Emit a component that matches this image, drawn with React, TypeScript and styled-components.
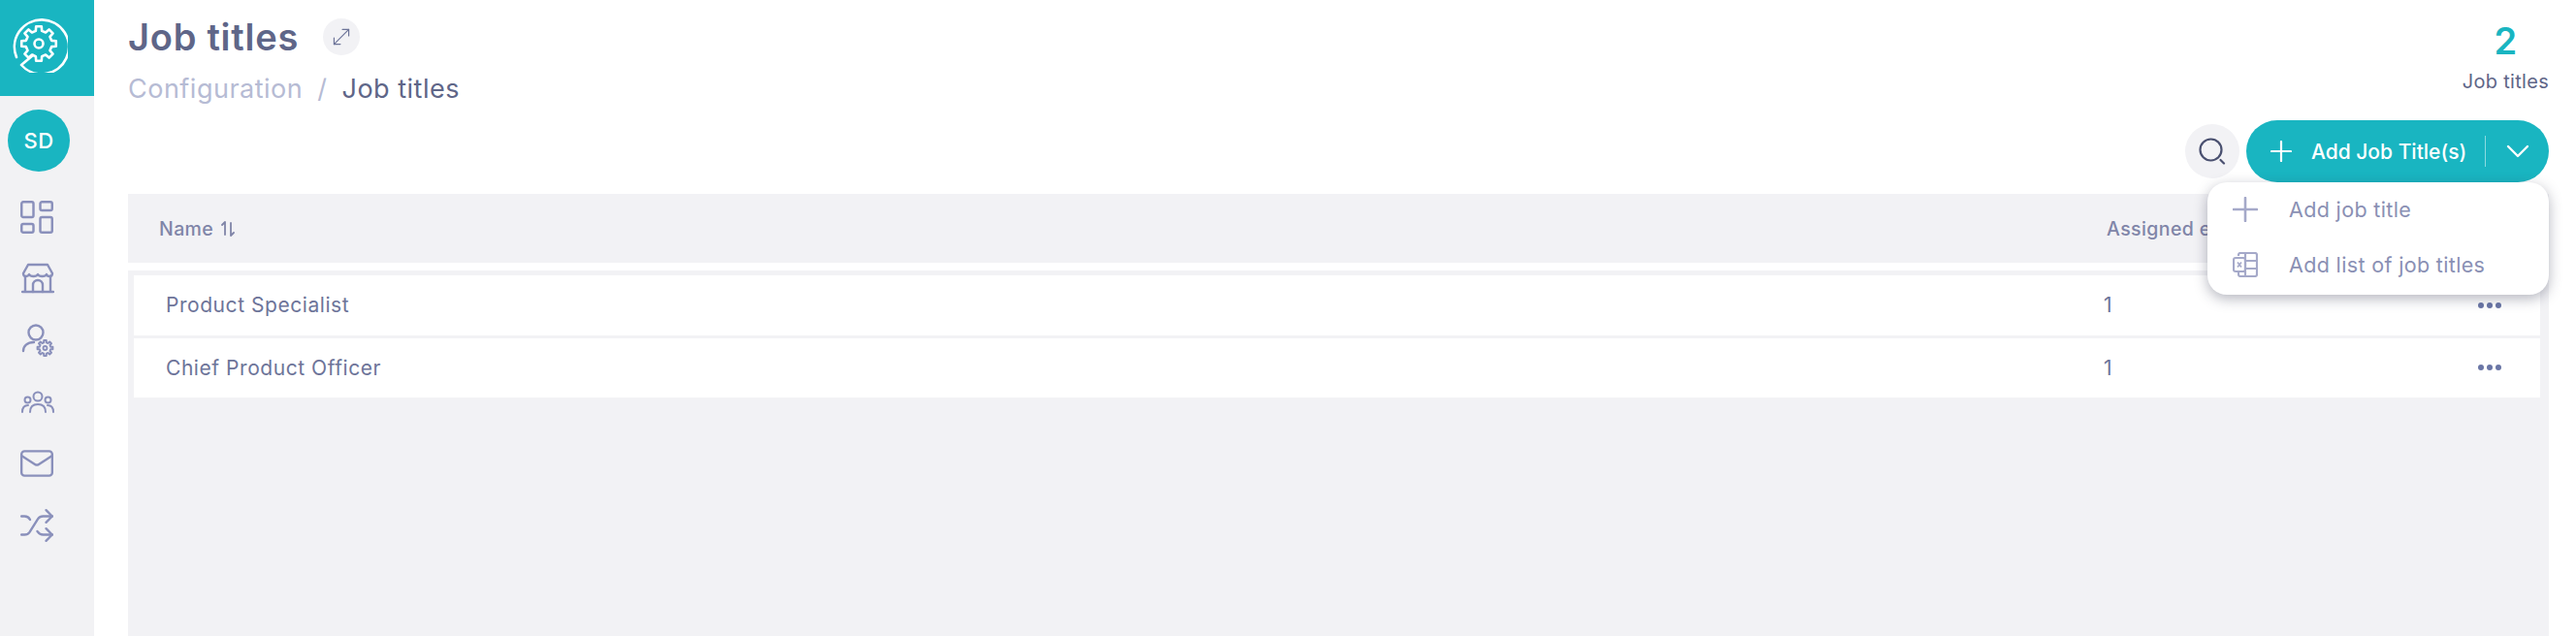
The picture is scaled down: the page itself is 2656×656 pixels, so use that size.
import { FC, ReactNode } from 'react'
import styled, { createGlobalStyle } from 'styled-components'
import { LayoutDashboard, Mail, MoveDiagonal, Shuffle } from 'lucide-react'

const GlobalStyle = createGlobalStyle`
  html, body {
    margin: 0;
    padding: 0;
    height: 100%;
    background: #fff;
    overflow: hidden;
  }
  body {
    font-family: Inter, "Open Sans", "Liberation Sans", sans-serif;
    color: #5f6688;
  }
`

const Page = styled.div`
  display: flex;
  width: 2656px;
  height: 656px;
  overflow: hidden;
`

const Sidebar = styled.aside`
  flex: 0 0 97px;
  display: flex;
  flex-direction: column;
  background-color: #f2f2f4;
`

const LogoBox = styled.div`
  height: 99px;
  padding-left: 10px;
  padding-top: 15px;
  box-sizing: border-box;
  background-color: #19b5c1;
`

const Avatar = styled.div`
  width: 64px;
  height: 64px;
  margin: 14px 0 0 8px;
  border-radius: 50%;
  background-color: #19b5c1;
  color: #fff;
  font-size: 22px;
  font-weight: 500;
  letter-spacing: 0.5px;
  display: flex;
  align-items: center;
  justify-content: center;
`

const NavList = styled.nav`
  display: flex;
  flex-direction: column;
  margin-top: 15px;
  color: #8a90bb;
`

const NavItem = styled.div`
  height: 63.6px;
  padding-left: 22px;
  display: flex;
  align-items: center;
  svg {
    display: block;
  }
`

const Main = styled.main`
  flex: 1;
  min-width: 0;
  display: flex;
  flex-direction: column;
  padding: 0 28px 0 35px;
`

const Header = styled.header`
  height: 124px;
  display: flex;
  justify-content: space-between;
`

const TitleBlock = styled.div`
  display: flex;
  flex-direction: column;
`

const TitleRow = styled.div`
  display: flex;
  align-items: center;
  height: 75px;
  gap: 25px;
`

const Title = styled.h1`
  margin: 0;
  font-size: 38px;
  font-weight: 600;
  letter-spacing: 0.75px;
  color: #5f6688;
`

const RoundButton = styled.div<{ $size: number }>`
  width: ${p => p.$size}px;
  height: ${p => p.$size}px;
  border-radius: 50%;
  background-color: #f2f2f5;
  display: flex;
  align-items: center;
  justify-content: center;
`

const Breadcrumb = styled.div`
  display: flex;
  align-items: center;
  gap: 15px;
  font-size: 27px;
  letter-spacing: 0.5px;
`

const Crumb = styled.span<{ $muted?: boolean }>`
  color: ${p => (p.$muted ? '#b6bbd4' : '#5f6688')};
`

const Stat = styled.div`
  display: flex;
  flex-direction: column;
  align-items: center;
  padding-top: 20px;
`

const StatValue = styled.div`
  font-size: 38px;
  line-height: 44px;
  font-weight: 600;
  color: #19b5c1;
`

const StatLabel = styled.div`
  margin-top: 8px;
  font-size: 20px;
  line-height: 24px;
  letter-spacing: 0.3px;
`

const Toolbar = styled.div`
  position: relative;
  height: 64px;
  display: flex;
  justify-content: flex-end;
  align-items: center;
  gap: 7px;
`

const AddButton = styled.div`
  width: 312px;
  height: 64px;
  box-sizing: border-box;
  padding: 0 20px 0 25px;
  border-radius: 32px;
  background-color: #19b5c1;
  color: #fff;
  font-size: 21px;
  font-weight: 500;
  display: flex;
  align-items: center;
`

const AddLabel = styled.span`
  margin-left: 20px;
  white-space: nowrap;
`

const Divider = styled.span`
  width: 1px;
  height: 32px;
  margin: 0 21px 0 auto;
  background-color: rgba(255, 255, 255, 0.5);
`

const Menu = styled.div`
  position: absolute;
  z-index: 2;
  top: 64px;
  right: 0;
  width: 352px;
  height: 116px;
  box-sizing: border-box;
  padding: 0 0 3px 26px;
  border-radius: 20px;
  background-color: #fff;
  box-shadow: 0 4px 14px rgba(40, 42, 70, 0.35);
  display: flex;
  flex-direction: column;
  justify-content: center;
`

const MenuItem = styled.div`
  height: 57px;
  display: flex;
  align-items: center;
  color: #8a90b4;
  font-size: 21.5px;
  letter-spacing: 0.35px;
`

const MenuIcon = styled.span`
  flex: 0 0 58px;
  display: flex;
  color: #a5a9c9;
`

const TableHead = styled.div`
  display: grid;
  grid-template-columns: 1fr 456px;
  align-items: center;
  height: 71px;
  margin-top: 12px;
  padding-left: 32px;
  background-color: #f2f2f5;
  color: #8085a8;
  font-size: 19.5px;
  font-weight: 500;
  letter-spacing: 0.4px;
`

const HeadCell = styled.div`
  display: flex;
  align-items: center;
  gap: 8px;
`

const TableBody = styled.div`
  flex: 1;
  margin-top: 8px;
  padding: 5px 9px 0 6px;
  background-color: #f2f2f5;
  display: flex;
  flex-direction: column;
  gap: 3px;
`

const Row = styled.div`
  display: grid;
  grid-template-columns: 1fr 360px 50px;
  align-items: center;
  height: 61.5px;
  padding: 0 40px 0 33px;
  background-color: #fff;
  color: #6d7499;
  font-size: 21px;
  letter-spacing: 0.55px;
`

const Kebab = styled.div`
  display: flex;
  justify-content: flex-end;
  gap: 3px;
`

const Dot = styled.span`
  width: 6px;
  height: 6px;
  border-radius: 50%;
  background-color: #6a76a6;
`

// gear outline, used by the logo and the user settings icon
const gearPath = (cx: number, cy: number, outer: number, inner: number, teeth = 8) => {
  const pts: string[] = []
  const step = (Math.PI * 2) / teeth
  for (let i = 0; i < teeth; i++) {
    const a = i * step - Math.PI / 2
    const w = step * 0.2
    const n = step * 0.3
    const pt = (r: number, t: number) =>
      `${(cx + r * Math.cos(t)).toFixed(2)} ${(cy + r * Math.sin(t)).toFixed(2)}`
    pts.push(pt(inner, a - n), pt(outer, a - w), pt(outer, a + w), pt(inner, a + n))
  }
  return `M${pts.join('L')}Z`
}

const Logo: FC = () => (
  <svg width="60" height="60" viewBox="0 0 60 60" fill="none" stroke="#fff" strokeWidth="2.6" strokeLinecap="round" strokeLinejoin="round">
    <path d="M7 44 A28 28 0 1 1 12 52 L24 42" />
    <path d={gearPath(30, 30, 18, 13.5)} />
    <circle cx="30" cy="30" r="4.5" />
  </svg>
)

const StoreIcon: FC = () => (
  <svg width="34" height="32" viewBox="0 0 34 32" fill="none" stroke="currentColor" strokeWidth="2.4" strokeLinecap="round" strokeLinejoin="round">
    <path d="M7 2h20l5 9c0 2-1 3-3 3-2.500 0-3-2-3-2s-1 2-4.500 2-4.500-2-4.500-2-1 2-4.500 2S8 12 8 12s-1 2-3 2-3-1-3-3z" />
    <path d="M4 14v16M30 14v16M1 30h32" />
    <path d="M12 30v-7a5 5 0 0 1 10 0v7" />
  </svg>
)

const UserGearIcon: FC = () => (
  <svg width="34" height="34" viewBox="0 0 34 34" fill="none" stroke="currentColor" strokeWidth="2.4" strokeLinecap="round" strokeLinejoin="round">
    <circle cx="15" cy="9" r="7.500" />
    <path d="M2 28c0-5 4-9 11-9" />
    <path d={gearPath(24.500, 25, 8, 5.800)} strokeWidth="2" />
    <circle cx="24.500" cy="25" r="2" strokeWidth="1.800" />
  </svg>
)

const TeamIcon: FC = () => (
  <svg width="34" height="24" viewBox="0 0 34 24" fill="none" stroke="currentColor" strokeWidth="2" strokeLinecap="round">
    <circle cx="17" cy="6" r="4.500" />
    <circle cx="6.500" cy="9.500" r="3" />
    <circle cx="27.500" cy="9.500" r="3" />
    <path d="M9 22c0-5 3-8 8-8s8 3 8 8" />
    <path d="M1 22c0-4 2-7 6-7M33 22c0-4-2-7-6-7" />
  </svg>
)

const SheetIcon: FC = () => (
  <svg width="26" height="26" viewBox="0 0 26 26" fill="none" stroke="currentColor" strokeWidth="2.200" strokeLinejoin="round">
    <path d="M6 4V3a2 2 0 0 1 2-2h15a2 2 0 0 1 2 2v20a2 2 0 0 1-2 2H8a2 2 0 0 1-2-2v-2" />
    <rect x="1" y="6" width="12" height="14" rx="2" />
    <path d="M13 1v24M13 9h12M13 17h12" />
    <path d="M5 10.500l4 5M9 10.500l-4 5" strokeWidth="1.800" />
  </svg>
)

const SortIcon: FC = () => (
  <svg width="14" height="18" viewBox="0 0 14 18" fill="none" stroke="currentColor" strokeWidth="1.800" strokeLinecap="round" strokeLinejoin="round">
    <path d="M4 15V2L1 5M10 3v13l3-3" />
  </svg>
)

const PlusIcon: FC<{ size: number; weight: number }> = ({ size, weight }) => (
  <svg width={size} height={size} viewBox={`0 0 ${size} ${size}`} fill="none" stroke="currentColor" strokeWidth={weight} strokeLinecap="round">
    <path d={`M${size / 2} 1V${size - 1}M1 ${size / 2}H${size - 1}`} />
  </svg>
)

const SearchIcon: FC = () => (
  <svg width="28" height="28" viewBox="0 0 28 28" fill="none" stroke="#4a5070" strokeWidth="2.200" strokeLinecap="round">
    <circle cx="12.500" cy="12.500" r="11" />
    <path d="M22.500 23l3.500 3.500" />
  </svg>
)

const ChevronIcon: FC = () => (
  <svg width="24" height="14" viewBox="0 0 24 14" fill="none" stroke="currentColor" strokeWidth="2.400" strokeLinecap="round" strokeLinejoin="round">
    <path d="M2 2l10 10L22 2" />
  </svg>
)

const navIcons: ReactNode[] = [
  <LayoutDashboard key="dash" size={42} strokeWidth={1.4} style={{ margin: '0 -5px' }} />,
  <StoreIcon key="store" />,
  <UserGearIcon key="user" />,
  <TeamIcon key="team" />,
  <Mail key="mail" size={38} strokeWidth={1.5} style={{ margin: '0 -3px' }} />,
  <Shuffle key="shuffle" size={38} strokeWidth={1.5} style={{ margin: '0 -3px' }} />,
]

const rows = ['Product Specialist', 'Chief Product Officer']

const App: FC = () => {
  return (
    <Page>
      <GlobalStyle />
      <Sidebar>
        <LogoBox>
          <Logo />
        </LogoBox>
        <Avatar>SD</Avatar>
        <NavList>
          {navIcons.map((icon, i) => (
            <NavItem key={i}>{icon}</NavItem>
          ))}
        </NavList>
      </Sidebar>
      <Main>
        <Header>
          <TitleBlock>
            <TitleRow>
              <Title>Job titles</Title>
              <RoundButton $size={38}>
                <MoveDiagonal size={26} strokeWidth={1.1} color="#6d7499" />
              </RoundButton>
            </TitleRow>
            <Breadcrumb>
              <Crumb $muted>Configuration</Crumb>
              <Crumb $muted>/</Crumb>
              <Crumb>Job titles</Crumb>
            </Breadcrumb>
          </TitleBlock>
          <Stat>
            <StatValue>2</StatValue>
            <StatLabel>Job titles</StatLabel>
          </Stat>
        </Header>
        <Toolbar>
          <RoundButton $size={56}>
            <SearchIcon />
          </RoundButton>
          <AddButton>
            <PlusIcon size={22} weight={2.2} />
            <AddLabel>Add Job Title(s)</AddLabel>
            <Divider />
            <ChevronIcon />
          </AddButton>
          <Menu>
            <MenuItem>
              <MenuIcon>
                <PlusIcon size={26} weight={2.6} />
              </MenuIcon>
              Add job title
            </MenuItem>
            <MenuItem>
              <MenuIcon>
                <SheetIcon />
              </MenuIcon>
              Add list of job titles
            </MenuItem>
          </Menu>
        </Toolbar>
        <TableHead>
          <HeadCell>
            Name <SortIcon />
          </HeadCell>
          <HeadCell>Assigned employees</HeadCell>
        </TableHead>
        <TableBody>
          {rows.map(name => (
            <Row key={name}>
              <span>{name}</span>
              <span>1</span>
              <Kebab>
                <Dot />
                <Dot />
                <Dot />
              </Kebab>
            </Row>
          ))}
        </TableBody>
      </Main>
    </Page>
  )
}

export default App
